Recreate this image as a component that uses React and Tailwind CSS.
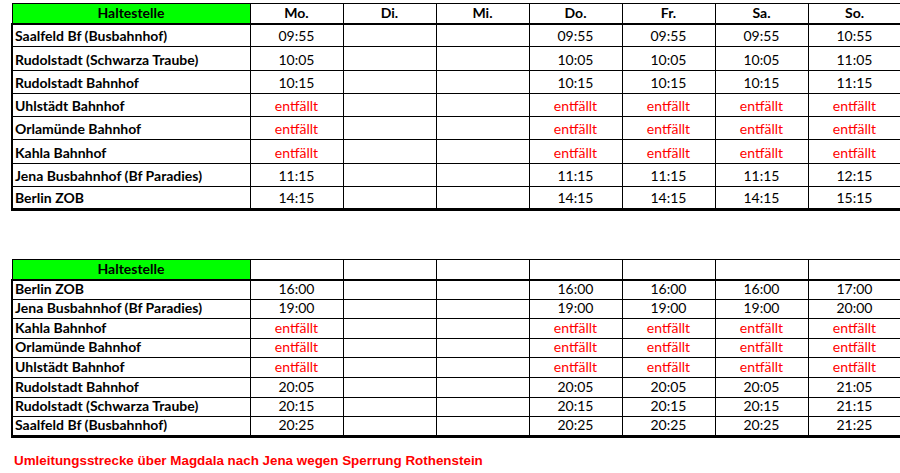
import React from "react";

const days = ["Mo.", "Di.", "Mi.", "Do.", "Fr.", "Sa.", "So."];
const X = "entfällt";

// Hinfahrt: Saalfeld -> Berlin
const outbound = [
	["Saalfeld Bf (Busbahnhof)", ["09:55", "", "", "09:55", "09:55", "09:55", "10:55"]],
	["Rudolstadt (Schwarza Traube)", ["10:05", "", "", "10:05", "10:05", "10:05", "11:05"]],
	["Rudolstadt Bahnhof", ["10:15", "", "", "10:15", "10:15", "10:15", "11:15"]],
	["Uhlstädt Bahnhof", [X, "", "", X, X, X, X]],
	["Orlamünde Bahnhof", [X, "", "", X, X, X, X]],
	["Kahla Bahnhof", [X, "", "", X, X, X, X]],
	["Jena Busbahnhof (Bf Paradies)", ["11:15", "", "", "11:15", "11:15", "11:15", "12:15"]],
	["Berlin ZOB", ["14:15", "", "", "14:15", "14:15", "14:15", "15:15"]],
];

// Rückfahrt: Berlin -> Saalfeld
const inbound = [
	["Berlin ZOB", ["16:00", "", "", "16:00", "16:00", "16:00", "17:00"]],
	["Jena Busbahnhof (Bf Paradies)", ["19:00", "", "", "19:00", "19:00", "19:00", "20:00"]],
	["Kahla Bahnhof", [X, "", "", X, X, X, X]],
	["Orlamünde Bahnhof", [X, "", "", X, X, X, X]],
	["Uhlstädt Bahnhof", [X, "", "", X, X, X, X]],
	["Rudolstadt Bahnhof", ["20:05", "", "", "20:05", "20:05", "20:05", "21:05"]],
	["Rudolstadt (Schwarza Traube)", ["20:15", "", "", "20:15", "20:15", "20:15", "21:15"]],
	["Saalfeld Bf (Busbahnhof)", ["20:25", "", "", "20:25", "20:25", "20:25", "21:25"]],
];

const Timetable = ({ rows, showDays, headH, rowH }) => (
	<table className="border-collapse table-fixed w-[889px] text-[14px] text-black">
		<colgroup>
			<col className="w-[238px]" />
			{days.map((d) => (
				<col key={d} className="w-[93px]" />
			))}
		</colgroup>
		<thead>
			<tr className={headH}>
				<th className="bg-[#00ff00] border border-black border-b-2 font-bold text-center p-0 leading-none">
					Haltestelle
				</th>
				{days.map((d) => (
					<th
						key={d}
						className="border border-black border-b-2 font-bold text-center p-0 leading-none"
					>
						{showDays ? d : ""}
					</th>
				))}
			</tr>
		</thead>
		<tbody>
			{rows.map(([name, times], i) => {
				const last = i === rows.length - 1;
				return (
					<tr key={name + i} className={rowH}>
						<td
							className={
								"border border-black border-l-2 font-bold text-left align-bottom pl-[2px] pb-[2px] leading-[16px] whitespace-nowrap" +
								(last ? " border-b-[3px]" : "")
							}
						>
							{name}
						</td>
						{times.map((t, j) => (
							<td
								key={j}
								className={
									"border border-black text-center align-bottom pb-[2px] leading-[16px] whitespace-nowrap" +
									(t === X ? " text-[#ff0000]" : "") +
									(last ? " border-b-[3px]" : "")
								}
							>
								{t}
							</td>
						))}
					</tr>
				);
			})}
		</tbody>
	</table>
);

export default function App() {
	return (
		<div className="w-[900px] h-[473px] bg-white overflow-hidden font-['Lato',sans-serif]">
			<div className="pl-[11px] pt-[3px]">
				<Timetable rows={outbound} showDays headH="h-[20px]" rowH="h-[23.25px]" />
			</div>
			<div className="pl-[11px] pt-[48px]">
				<Timetable rows={inbound} showDays={false} headH="h-[20px]" rowH="h-[19.6px]" />
			</div>
			<p className="pl-[14px] pt-[13px] font-['Liberation_Sans',Arial,sans-serif] font-bold text-[13.4px] text-[#ff0000]">
				Umleitungsstrecke über Magdala nach Jena wegen Sperrung Rothenstein
			</p>
		</div>
	);
}
